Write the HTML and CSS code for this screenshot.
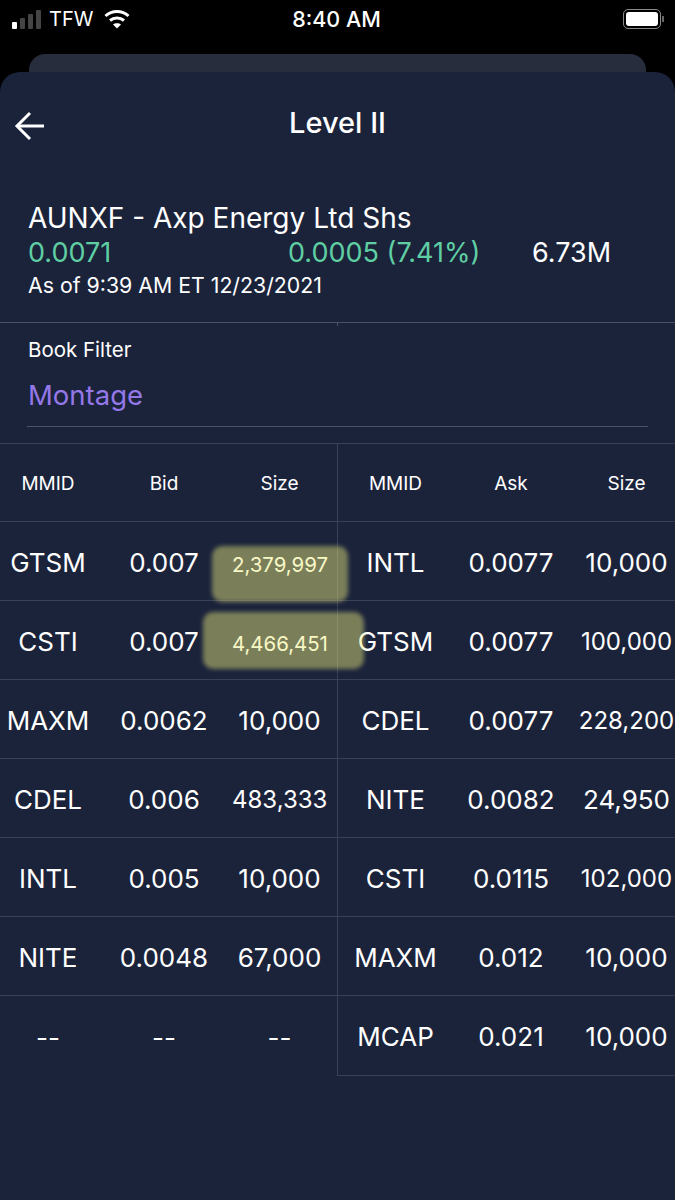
FILE: index.html
```html
<!DOCTYPE html>
<html lang="en">
<head>
  <meta charset="UTF-8">
  <meta name="viewport" content="width=device-width, initial-scale=1.0">
  <title>Level II</title>
  <link rel="stylesheet" href="styles.css">
</head>
<body>
  <div class="status-bar">
    <div class="status-left">
      <svg class="signal" width="30" height="19" viewBox="0 0 30 19">
        <rect x="0" y="12" width="5" height="7" rx="1" fill="#fff"/>
        <rect x="8" y="8" width="5" height="11" rx="1" fill="#444"/>
        <rect x="16" y="4" width="5" height="15" rx="1" fill="#444"/>
        <rect x="24" y="0" width="5" height="19" rx="1" fill="#444"/>
      </svg>
      <span class="carrier">TFW</span>
      <svg class="wifi" width="26" height="20" viewBox="0 0 26 20" fill="none" stroke="#fff" stroke-width="3">
        <path d="M1.5 7 C8 1 18 1 24.5 7"/>
        <path d="M6 11.5 C10 8 16 8 20 11.5"/>
        <path d="M13 19.5 L9 15.5 C11 13.8 15 13.8 17 15.5 Z" fill="#fff" stroke="none"/>
      </svg>
    </div>
    <span class="clock">8:40 AM</span>
    <div class="battery"><div class="battery-fill"></div></div>
  </div>

  <div class="back-card"></div>

  <main class="sheet">
    <header class="sheet-header">
      <svg class="back-arrow" width="32" height="32" viewBox="0 0 32 32" fill="none" stroke="#fff" stroke-width="3">
        <path d="M30 16 H3"/>
        <path d="M16 3 L3 16 L16 29"/>
      </svg>
      <h1>Level II</h1>
    </header>

    <section class="quote">
      <div class="quote-name">AUNXF - Axp Energy Ltd Shs</div>
      <div class="quote-line">
        <span class="last green">0.0071</span>
        <span class="change green">0.0005 (7.41%)</span>
        <span class="volume">6.73M</span>
      </div>
      <div class="quote-time">As of 9:39 AM ET 12/23/2021</div>
    </section>

    <section class="filter">
      <div class="filter-label">Book Filter</div>
      <div class="filter-value">Montage</div>
    </section>

    <section class="book">
      <div class="row head">
        <div class="side bid"><span>MMID</span><span>Bid</span><span>Size</span></div>
        <div class="side ask"><span>MMID</span><span>Ask</span><span>Size</span></div>
      </div>
      <div class="row">
        <div class="side bid"><span>GTSM</span><span>0.007</span><span class="small">2,379,997</span></div>
        <div class="side ask"><span>INTL</span><span>0.0077</span><span>10,000</span></div>
      </div>
      <div class="row">
        <div class="side bid"><span>CSTI</span><span>0.007</span><span class="small">4,466,451</span></div>
        <div class="side ask"><span>GTSM</span><span>0.0077</span><span class="mid">100,000</span></div>
      </div>
      <div class="row">
        <div class="side bid"><span>MAXM</span><span>0.0062</span><span>10,000</span></div>
        <div class="side ask"><span>CDEL</span><span>0.0077</span><span class="mid">228,200</span></div>
      </div>
      <div class="row">
        <div class="side bid"><span>CDEL</span><span>0.006</span><span class="mid">483,333</span></div>
        <div class="side ask"><span>NITE</span><span>0.0082</span><span>24,950</span></div>
      </div>
      <div class="row">
        <div class="side bid"><span>INTL</span><span>0.005</span><span>10,000</span></div>
        <div class="side ask"><span>CSTI</span><span>0.0115</span><span class="mid">102,000</span></div>
      </div>
      <div class="row">
        <div class="side bid"><span>NITE</span><span>0.0048</span><span>67,000</span></div>
        <div class="side ask"><span>MAXM</span><span>0.012</span><span>10,000</span></div>
      </div>
      <div class="row last-row">
        <div class="side bid last-bid"><span>--</span><span>--</span><span>--</span></div>
        <div class="side ask"><span>MCAP</span><span>0.021</span><span>10,000</span></div>
      </div>
      <div class="marker marker-one"></div>
      <div class="marker marker-two"></div>
    </section>
  </main>
</body>
</html>
```

FILE: styles.css
```css
* {
  box-sizing: border-box;
}
html,
body {
  margin: 0;
  padding: 0;
}
body {
  width: 675px;
  height: 1200px;
  overflow: hidden;
  position: relative;
  background-color: #000;
  color: #fff;
  font-family: Inter, "Liberation Sans", sans-serif;
}

/* status bar */
.status-bar {
  height: 38px;
  padding: 0 14px 0 12px;
  display: grid;
  grid-template-columns: 1fr auto 1fr;
  align-items: center;
}
.status-left {
  display: flex;
  align-items: center;
}
.carrier {
  margin-left: 7px;
  font-size: 20px;
}
.wifi {
  margin-left: 11px;
}
.clock {
  font-size: 21.5px;
  font-weight: 500;
}
.battery {
  justify-self: end;
  position: relative;
  width: 38px;
  height: 20px;
  padding: 2px;
  border: 1px solid #888;
  border-radius: 5px;
}
.battery::after {
  content: "";
  position: absolute;
  right: -4px;
  top: 6px;
  width: 2px;
  height: 6px;
  background-color: #666;
}
.battery-fill {
  height: 100%;
  background-color: #fff;
  border-radius: 3px;
}

/* sheets */
.back-card {
  height: 34px;
  margin: 16px 29px 0;
  background-color: #272d3d;
  border-radius: 16px 16px 0 0;
}
.sheet {
  height: 1128px;
  margin-top: -16px;
  position: relative;
  background-color: #1b233b;
  border-radius: 20px 20px 0 0;
}
.sheet-header {
  height: 108px;
  padding-top: 33px;
  position: relative;
  text-align: center;
}
.sheet-header h1 {
  margin: 0;
  font-size: 29px;
  line-height: 36px;
  font-weight: 500;
}
.back-arrow {
  position: absolute;
  left: 14px;
  top: 38px;
}

/* quote */
.quote {
  height: 143px;
  padding: 20px 28px 0;
  border-bottom: 1px solid #4a5066;
}
.quote-name {
  font-size: 28px;
  line-height: 36px;
}
.quote-line {
  display: flex;
  font-size: 27px;
  line-height: 34px;
}
.last {
  width: 260px;
}
.change {
  width: 244px;
}
.green {
  color: #5fcfa3;
}
.quote-time {
  margin-top: 1px;
  font-size: 21.3px;
  line-height: 28px;
}

/* book filter */
.filter {
  height: 121px;
  padding: 13px 27px 0;
  position: relative;
  border-bottom: 1px solid #3a4056;
}
.filter::before {
  content: "";
  position: absolute;
  left: 337px;
  top: 0;
  width: 1px;
  height: 3px;
  background-color: #4a5066;
}
.filter-label {
  padding-left: 1px;
  font-size: 20.5px;
  line-height: 28px;
}
.filter-value {
  height: 63px;
  padding: 12px 0 0 1px;
  width: 621px;
  font-size: 27.5px;
  line-height: 38px;
  color: #9478e8;
  border-bottom: 1px solid #4a5066;
}

/* level ii table */
.book {
  position: relative;
}
.row {
  display: flex;
  height: 79px;
}
.row.head {
  height: 78px;
}
.row.last-row {
  height: 80px;
}
.side {
  display: grid;
  height: 100%;
  padding-top: 2px;
  align-items: center;
  text-align: center;
  font-size: 26px;
  border-bottom: 1px solid #3a4056;
}
.bid {
  width: 337px;
  grid-template-columns: 96px 136px 105px;
}
.bid span:nth-child(3) {
  padding-right: 10px;
}
.ask {
  width: 338px;
  grid-template-columns: 115px 116px 115px;
  border-left: 1px solid #3a4056;
}
.last-bid {
  border-bottom: none;
}
.head .side {
  font-size: 19px;
}
.small {
  padding-top: 4px;
  font-size: 20.4px;
}
.mid {
  font-size: 24px;
}

/* hand drawn highlighter over the sizes */
.marker {
  position: absolute;
  background-color: rgba(240, 240, 126, 0.45);
  border-radius: 10px;
  filter: blur(2px);
}
.marker-one {
  left: 212px;
  top: 102px;
  width: 136px;
  height: 56px;
}
.marker-two {
  left: 203px;
  top: 168px;
  width: 161px;
  height: 57px;
}
```
